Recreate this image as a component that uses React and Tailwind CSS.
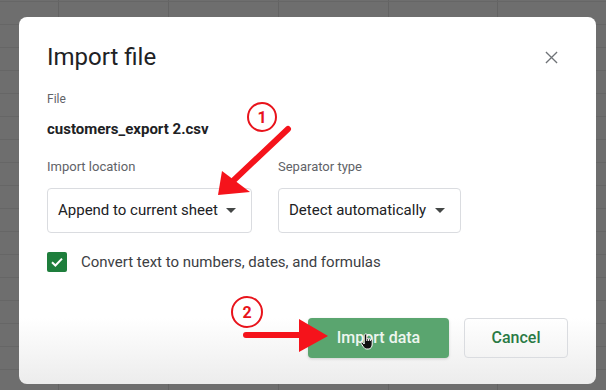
import React from "react";

function Caret() {
  return (
    <svg width="10" height="5" viewBox="0 0 10 5" className="shrink-0">
      <path d="M0 0h10L5 5z" fill="#444746" />
    </svg>
  );
}

function Select({ label, value, width }) {
  return (
    <div className="flex flex-col">
      <div className="text-[13px] leading-[18px] text-[#5f6368]">{label}</div>
      <div
        className={`mt-3 h-[45px] ${width} rounded-[4px] border border-[#dadce0] flex items-center justify-between pl-[10px] pr-[15px]`}
      >
        <span className="text-[15px] whitespace-nowrap text-[#202124]">{value}</span>
        <Caret />
      </div>
    </div>
  );
}

export default function App() {
  const vlines = [58, 168, 278, 388, 497];
  const hlines = [];
  for (let y = 0; y < 390; y += 23) hlines.push(y + 1);
  return (
    <div
      className="relative w-[606px] h-[390px] overflow-hidden bg-[#6e6e6e] pt-[17px] pl-[19px]"
      style={{ fontFamily: "Roboto, 'Noto Sans', sans-serif" }}
    >
      <svg className="absolute inset-0" width="606" height="390">
        {vlines.map((x) => (
          <line key={x} x1={x + 0.5} y1="0" x2={x + 0.5} y2="390" stroke="#636363" strokeWidth="1" />
        ))}
        {hlines.map((y) => (
          <line key={y} x1="0" y1={y + 0.5} x2="606" y2={y + 0.5} stroke="#666666" strokeWidth="1" />
        ))}
      </svg>

      <div className="relative w-[577px] h-[367px] rounded-[8px] bg-[linear-gradient(to_bottom,#ffffff_82%,#ececec)] pl-[28px] pr-[28px] pt-[24px] flex flex-col">
        <div className="flex items-center justify-between h-[32px]">
          <div className="text-[24px] leading-[32px] text-[#202124]">Import file</div>
          <svg width="13" height="13" viewBox="0 0 14 14" className="mr-[10px]">
            <path d="M1 1L13 13M13 1L1 13" stroke="#6f7377" strokeWidth="1.4" />
          </svg>
        </div>

        <div className="mt-[18px] text-[12px] leading-[16px] text-[#5f6368]">File</div>
        <div className="mt-[12px] text-[15px] leading-[20px] font-bold text-[#202124]">
          customers_export 2.csv
        </div>

        <div className="mt-[19px] flex gap-[26px]">
          <Select label="Import location" value="Append to current sheet" width="w-[205px]" />
          <Select label="Separator type" value="Detect automatically" width="w-[183px]" />
        </div>

        <div className="mt-[18px] flex items-center gap-[14px]">
          <div className="w-[20px] h-[20px] rounded-[2px] bg-[#1e7e3c] flex items-center justify-center">
            <svg width="14" height="14" viewBox="0 0 14 14">
              <path d="M2 7.2L5.4 10.5L12 3.6" fill="none" stroke="#fff" strokeWidth="2" />
            </svg>
          </div>
          <span className="text-[15px] whitespace-nowrap text-[#3c4043]">Convert text to numbers, dates, and formulas</span>
        </div>

        <div className="mt-[44px] flex justify-end gap-[15px]">
          <div className="w-[141px] h-[40px] rounded-[4px] bg-[#5aa56f] flex items-center justify-center text-[16px] font-medium text-[#eef6f0] shadow-[0_1px_3px_rgba(0,0,0,0.15)]">
            Import data
          </div>
          <div className="w-[104px] h-[40px] rounded-[4px] border border-[#dadce0] flex items-center justify-center text-[16px] font-medium text-[#2a7a45]">
            Cancel
          </div>
        </div>
      </div>

      {/* annotations */}
      <svg className="absolute inset-0 pointer-events-none" width="606" height="390">
        <circle cx="262" cy="117" r="14" fill="#fff" stroke="#e8131b" strokeWidth="2" />
        <text x="262" y="123" textAnchor="middle" fontSize="16" fontWeight="700" fill="#e8131b" fontFamily="Roboto, sans-serif">1</text>
        <line x1="288" y1="129" x2="234" y2="180" stroke="#f5131b" strokeWidth="6" strokeLinecap="round" />
        <path d="M218 195L222 171L250 192Z" fill="#f5131b" />

        <circle cx="247" cy="312" r="15" fill="#fff" stroke="#e8131b" strokeWidth="2" />
        <text x="247" y="318" textAnchor="middle" fontSize="16" fontWeight="700" fill="#e8131b" fontFamily="Roboto, sans-serif">2</text>
        <line x1="246" y1="335" x2="302" y2="335" stroke="#f5131b" strokeWidth="6" strokeLinecap="round" />
        <path d="M299 319L328 336L299 352Z" fill="#f5131b" />

        {/* hand cursor */}
        <g transform="translate(361 333)">
          <path
            d="M4 1.5c0-1 1.8-1 1.8 0v6.5 M5.8 6c0-1 1.8-1 1.8 0v2 M7.6 6.5c0-1 1.8-1 1.8 0v1.5 M9.4 7c0-1 1.8-1 1.8 0v4c0 3-1.5 5-4 5h-1.5c-1.5 0-2.5-1-3.5-2.5l-2-3c-.6-1 .6-2 1.5-1l1.5 1.5V1.5"
            fill="#111"
            stroke="#fff"
            strokeWidth="1"
            strokeLinejoin="round"
          />
        </g>
      </svg>
    </div>
  );
}
